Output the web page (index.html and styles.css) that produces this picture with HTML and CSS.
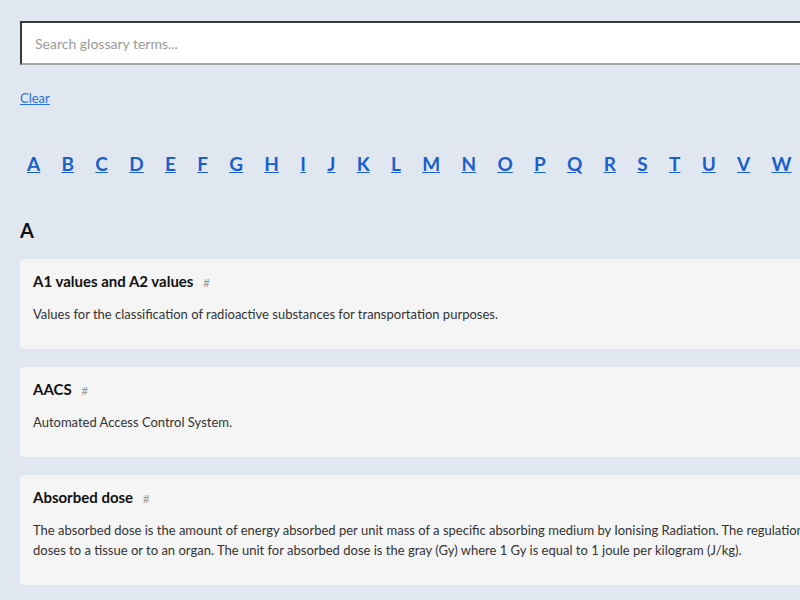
FILE: index.html
```html
<!DOCTYPE html>
<html lang="en">
<head>
<meta charset="utf-8">
<title>Glossary</title>
<link rel="stylesheet" href="styles.css">
</head>
<body>
<div class="page">
  <div class="search">
    <input class="search-input" type="text" placeholder="Search glossary terms...">
  </div>
  <a class="clear" href="#">Clear</a>
  <nav class="letters">
    <a href="#A">A</a><a href="#B">B</a><a href="#C">C</a><a href="#D">D</a><a href="#E">E</a><a href="#F">F</a><a href="#G">G</a><a href="#H">H</a><a href="#I">I</a><a href="#J">J</a><a href="#K">K</a><a href="#L">L</a><a href="#M">M</a><a href="#N">N</a><a href="#O">O</a><a href="#P">P</a><a href="#Q">Q</a><a href="#R">R</a><a href="#S">S</a><a href="#T">T</a><a href="#U">U</a><a href="#V">V</a><a href="#W">W</a><a href="#X">X</a><a href="#Y">Y</a><a href="#Z">Z</a>
  </nav>
  <section class="group" id="A">
    <h2 class="group-title">A</h2>
    <article class="term">
      <h3 class="term-title">A1 values and A2 values <a class="anchor" href="#a1">#</a></h3>
      <p class="term-desc">Values for the classification of radioactive substances for transportation purposes.</p>
    </article>
    <article class="term">
      <h3 class="term-title">AACS <a class="anchor" href="#aacs">#</a></h3>
      <p class="term-desc">Automated Access Control System.</p>
    </article>
    <article class="term">
      <h3 class="term-title">Absorbed dose <a class="anchor" href="#absorbed">#</a></h3>
      <p class="term-desc">The absorbed dose is the amount of energy absorbed per unit mass of a specific absorbing medium by Ionising Radiation. The regulations set limits on absorbed doses to a tissue or to an organ. The unit for absorbed dose is the gray (Gy) where 1 Gy is equal to 1 joule per kilogram (J/kg).</p>
    </article>
  </section>
</div>
</body>
</html>
```
FILE: styles.css
```css
html, body {
  margin: 0;
  padding: 0;
  overflow: hidden;
  background: #e1e7f0;
}
body {
  font-family: Lato, "Liberation Sans", sans-serif;
  color: #222;
}
.page {
  width: 950px;
  padding: 21px 20px 20px;
}
.search {
  display: flex;
}
.search-input {
  flex: 1;
  height: 44px;
  box-sizing: border-box;
  border: 2px solid;
  border-color: #3a3a3a #a0a0a0 #a8a8a8 #3a3a3a;
  background: #fff;
  padding: 0 13px;
  font-family: inherit;
  font-size: 14px;
  color: #222;
}
.search-input::placeholder {
  color: #9a9a9a;
}
.clear {
  display: inline-block;
  margin-top: 25px;
  font-size: 13px;
  line-height: 16px;
  color: #2a6fd8;
}
.letters {
  display: flex;
  gap: 21.3px;
  padding-left: 7px;
  margin-top: 46px;
}
.letters a {
  font-size: 19px;
  font-weight: 700;
  line-height: 24px;
  color: #1a5fcc;
}
.group-title {
  margin: 42px 0 0;
  font-size: 20px;
  line-height: 24px;
  font-weight: 700;
  color: #111;
}
.term {
  background: #f5f5f5;
  border-radius: 4px;
  padding: 12px 13px;
  margin-top: 18px;
}
.group-title + .term {
  margin-top: 17px;
}
.term-title {
  margin: 0;
  font-size: 15px;
  line-height: 20px;
  font-weight: 700;
  color: #111;
}
.anchor {
  margin-left: 6px;
  font-size: 12px;
  line-height: 12px;
  font-weight: 400;
  color: #9a9a9a;
  text-decoration: none;
}
.term-desc {
  margin: 13px 0;
  font-size: 13px;
  line-height: 20px;
  color: #333;
}
```
